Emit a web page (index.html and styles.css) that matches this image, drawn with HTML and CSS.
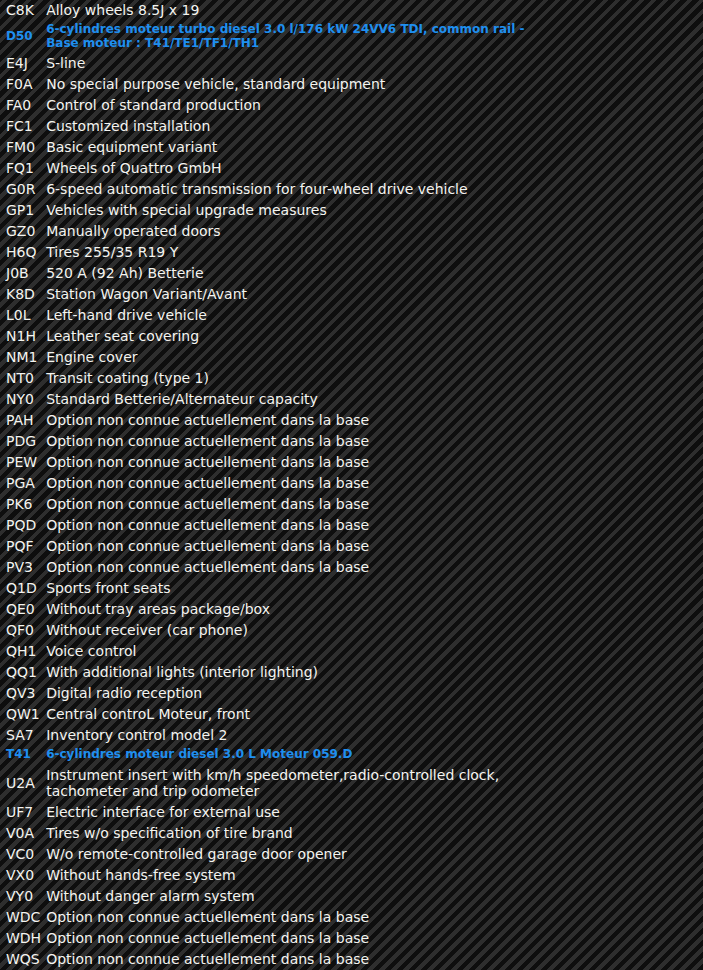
FILE: index.html
```html
<!DOCTYPE html>
<html lang="fr">
  <head>
    <meta charset="UTF-8" />
    <meta name="viewport" content="width=device-width, initial-scale=1.0" />
    <title>Options vehicule</title>
    <link rel="stylesheet" href="styles.css">
  </head>
  <body>
    <table class="options">
      <tr><td class="code">C8K</td><td class="desc">Alloy wheels 8.5J x 19</td></tr>
      <tr class="main"><td class="code">D50</td><td class="desc">6-cylindres moteur turbo diesel 3.0 l/176 kW 24VV6 TDI, common rail -<br>Base moteur : T41/TE1/TF1/TH1</td></tr>
      <tr><td class="code">E4J</td><td class="desc">S-line</td></tr>
      <tr><td class="code">F0A</td><td class="desc">No special purpose vehicle, standard equipment</td></tr>
      <tr><td class="code">FA0</td><td class="desc">Control of standard production</td></tr>
      <tr><td class="code">FC1</td><td class="desc">Customized installation</td></tr>
      <tr><td class="code">FM0</td><td class="desc">Basic equipment variant</td></tr>
      <tr><td class="code">FQ1</td><td class="desc">Wheels of Quattro GmbH</td></tr>
      <tr><td class="code">G0R</td><td class="desc">6-speed automatic transmission for four-wheel drive vehicle</td></tr>
      <tr><td class="code">GP1</td><td class="desc">Vehicles with special upgrade measures</td></tr>
      <tr><td class="code">GZ0</td><td class="desc">Manually operated doors</td></tr>
      <tr><td class="code">H6Q</td><td class="desc">Tires 255/35 R19 Y</td></tr>
      <tr><td class="code">J0B</td><td class="desc">520 A (92 Ah) Betterie</td></tr>
      <tr><td class="code">K8D</td><td class="desc">Station Wagon Variant/Avant</td></tr>
      <tr><td class="code">L0L</td><td class="desc">Left-hand drive vehicle</td></tr>
      <tr><td class="code">N1H</td><td class="desc">Leather seat covering</td></tr>
      <tr><td class="code">NM1</td><td class="desc">Engine cover</td></tr>
      <tr><td class="code">NT0</td><td class="desc">Transit coating (type 1)</td></tr>
      <tr><td class="code">NY0</td><td class="desc">Standard Betterie/Alternateur capacity</td></tr>
      <tr><td class="code">PAH</td><td class="desc">Option non connue actuellement dans la base</td></tr>
      <tr><td class="code">PDG</td><td class="desc">Option non connue actuellement dans la base</td></tr>
      <tr><td class="code">PEW</td><td class="desc">Option non connue actuellement dans la base</td></tr>
      <tr><td class="code">PGA</td><td class="desc">Option non connue actuellement dans la base</td></tr>
      <tr><td class="code">PK6</td><td class="desc">Option non connue actuellement dans la base</td></tr>
      <tr><td class="code">PQD</td><td class="desc">Option non connue actuellement dans la base</td></tr>
      <tr><td class="code">PQF</td><td class="desc">Option non connue actuellement dans la base</td></tr>
      <tr><td class="code">PV3</td><td class="desc">Option non connue actuellement dans la base</td></tr>
      <tr><td class="code">Q1D</td><td class="desc">Sports front seats</td></tr>
      <tr><td class="code">QE0</td><td class="desc">Without tray areas package/box</td></tr>
      <tr><td class="code">QF0</td><td class="desc">Without receiver (car phone)</td></tr>
      <tr><td class="code">QH1</td><td class="desc">Voice control</td></tr>
      <tr><td class="code">QQ1</td><td class="desc">With additional lights (interior lighting)</td></tr>
      <tr><td class="code">QV3</td><td class="desc">Digital radio reception</td></tr>
      <tr><td class="code">QW1</td><td class="desc">Central controL Moteur, front</td></tr>
      <tr><td class="code">SA7</td><td class="desc">Inventory control model 2</td></tr>
      <tr class="main"><td class="code">T41</td><td class="desc">6-cylindres moteur diesel 3.0 L Moteur 059.D</td></tr>
      <tr><td class="code">U2A</td><td class="desc">Instrument insert with km/h speedometer,radio-controlled clock,<br>tachometer and trip odometer</td></tr>
      <tr><td class="code">UF7</td><td class="desc">Electric interface for external use</td></tr>
      <tr><td class="code">V0A</td><td class="desc">Tires w/o specification of tire brand</td></tr>
      <tr><td class="code">VC0</td><td class="desc">W/o remote-controlled garage door opener</td></tr>
      <tr><td class="code">VX0</td><td class="desc">Without hands-free system</td></tr>
      <tr><td class="code">VY0</td><td class="desc">Without danger alarm system</td></tr>
      <tr><td class="code">WDC</td><td class="desc">Option non connue actuellement dans la base</td></tr>
      <tr><td class="code">WDH</td><td class="desc">Option non connue actuellement dans la base</td></tr>
      <tr><td class="code">WQS</td><td class="desc">Option non connue actuellement dans la base</td></tr>
    </table>
  </body>
</html>
```

FILE: styles.css
```css
* {
  margin: 0;
  padding: 0;
}
body {
  font-family: "DejaVu Sans", Verdana, sans-serif;
  font-size: 14px;
  color: #f4f4f0;
  min-height: 100vh;
  background-color: #0e0e0e;
  background-image: repeating-linear-gradient(
    -45deg,
    #0e0e0e 0,
    #0e0e0e 4.5px,
    #2e2e2e 4.5px,
    #2e2e2e 8.5px
  );
}
.options {
  border-collapse: collapse;
}
.options td {
  padding: 2px 0 3px;
  line-height: 16px;
  vertical-align: middle;
}
.code {
  padding-left: 6px !important;
  width: 34px;
  white-space: nowrap;
}
.desc {
  padding-left: 5px !important;
  white-space: nowrap;
}
.main td {
  color: #1f8fef;
  font-weight: bold;
  font-size: 12px;
  line-height: 13.5px;
}
```
